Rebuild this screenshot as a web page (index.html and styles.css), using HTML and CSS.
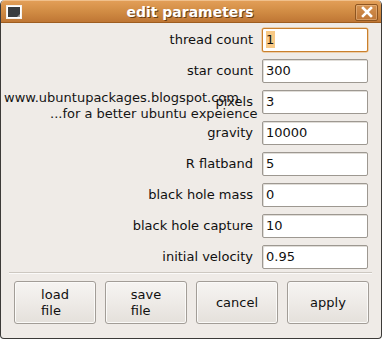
FILE: index.html
```html
<!DOCTYPE html>
<html>
<head>
<meta charset="utf-8">
<link rel="stylesheet" href="styles.css">
</head>
<body>
<div class="window">
  <div class="titlebar">
    <svg class="win-icon" width="16" height="14" viewBox="0 0 16 14">
      <rect x="0.5" y="0.5" width="15" height="13" fill="#ffffff" stroke="#f4f1ec"/>
      <rect x="2" y="2" width="12" height="10" fill="#3a3d3f"/>
      <path d="M11 12 L14 9 L14 12 Z" fill="#9a9a9a"/>
    </svg>
    <div class="title">edit parameters</div>
    <div class="close">
      <svg width="12" height="12" viewBox="0 0 12 12">
        <path d="M2 2 L10 10 M10 2 L2 10" stroke="#ffffff" stroke-width="2.6" stroke-linecap="square"/>
      </svg>
    </div>
  </div>
  <div class="content">
    <div class="form">
      <label>thread count</label><div class="entry focus"><span class="sel">1</span></div>
      <label>star count</label><div class="entry">300</div>
      <label>pixels</label><div class="entry">3</div>
      <label>gravity</label><div class="entry">10000</div>
      <label>R flatband</label><div class="entry">5</div>
      <label>black hole mass</label><div class="entry">0</div>
      <label>black hole capture</label><div class="entry">10</div>
      <label>initial velocity</label><div class="entry">0.95</div>
    </div>
    <div class="sep"></div>
    <div class="buttons">
      <div class="btn"><span class="btxt">load<br>file</span></div>
      <div class="btn"><span class="btxt">save<br>file</span></div>
      <div class="btn"><span class="btxt">cancel</span></div>
      <div class="btn"><span class="btxt">apply</span></div>
    </div>
    <div class="watermark">
      <div class="wm1">www.ubuntupackages.blogspot.com</div>
      <div class="wm2">...for a better ubuntu expeience</div>
    </div>
  </div>
</div>
</body>
</html>
```
FILE: styles.css
```css
html, body {
  margin: 0;
  padding: 0;
  background: #ffffff;
}
body {
  width: 382px;
  height: 339px;
  font-family: "DejaVu Sans", sans-serif;
  font-size: 13px;
  color: #101010;
}
.window {
  width: 382px;
  height: 339px;
  box-sizing: border-box;
  border: 1px solid #3c3a38;
  border-top: none;
  border-radius: 5px 5px 4px 4px;
  background: #efebe7;
  overflow: hidden;
  position: relative;
}
.titlebar {
  height: 23px;
  background: linear-gradient(#e29e57, #d18c44 50%, #bf7634);
  border-bottom: 1px solid #9e5d20;
  box-sizing: border-box;
  display: flex;
  align-items: center;
  padding: 0 4px 0 6px;
  margin: 0 -1px;
  border-radius: 5px 5px 0 0;
  border-top: 1px solid #f0c08c;
}
.win-icon {
  flex: none;
  margin-top: 1px;
}
.title {
  flex: 1;
  text-align: center;
  color: #ffffff;
  font-weight: bold;
  font-size: 14px;
  text-shadow: 1px 1px 0 #6b3e14;
  margin-left: 3px;
  line-height: 16px;
}
.close {
  flex: none;
  width: 23px;
  height: 17px;
  box-sizing: border-box;
  border: 1px solid #8e5520;
  border-radius: 2px;
  background: linear-gradient(#d59250, #bf7736);
  box-shadow: inset 0 0 0 1px rgba(255,220,180,0.35);
  display: flex;
  align-items: center;
  justify-content: center;
  margin-top: 1px;
}
.content {
  padding: 5px 13px 0 12px;
}
.form {
  display: grid;
  grid-template-columns: 240px 106px;
  column-gap: 9px;
  row-gap: 7px;
}
.form label {
  text-align: right;
  line-height: 24px;
  height: 24px;
  white-space: nowrap;
}
.entry {
  height: 24px;
  box-sizing: border-box;
  border: 1px solid #9d9891;
  border-radius: 2px;
  background: #ffffff;
  padding: 0 3px;
  line-height: 22px;
  box-shadow: inset 1px 1px 0 #e0ddd8;
}
.entry.focus {
  border-color: #c97f2c;
  box-shadow: 0 0 0 0.5px #e9b06b;
}
.sel {
  background: #f8c985;
  display: inline-block;
  line-height: 17px;
  padding: 0 1px 0 0;
}
.sep {
  height: 1px;
  background: #cdc8c1;
  border-bottom: 1px solid #fbfaf9;
  margin: 3px -4px 0 -4px;
}
.buttons {
  display: grid;
  grid-template-columns: repeat(4, 82px);
  column-gap: 9px;
  margin-top: 7px;
  padding-left: 1px;
}
.btn {
  height: 43px;
  box-sizing: border-box;
  border: 1px solid #a29d97;
  border-radius: 3px;
  background: linear-gradient(#f6f4f2, #eeebe7 50%, #e4e0db);
  box-shadow: inset 0 0 0 1px #fbfaf8;
  display: flex;
  align-items: center;
  justify-content: center;
}
.btxt {
  text-align: left;
  line-height: 16px;
}
.watermark {
  position: absolute;
  left: 3px;
  top: 90px;
  font-size: 13px;
  color: #151515;
  pointer-events: none;
}
.wm1 {
  line-height: 16px;
}
.wm2 {
  line-height: 16px;
  padding-left: 46px;
}
```
